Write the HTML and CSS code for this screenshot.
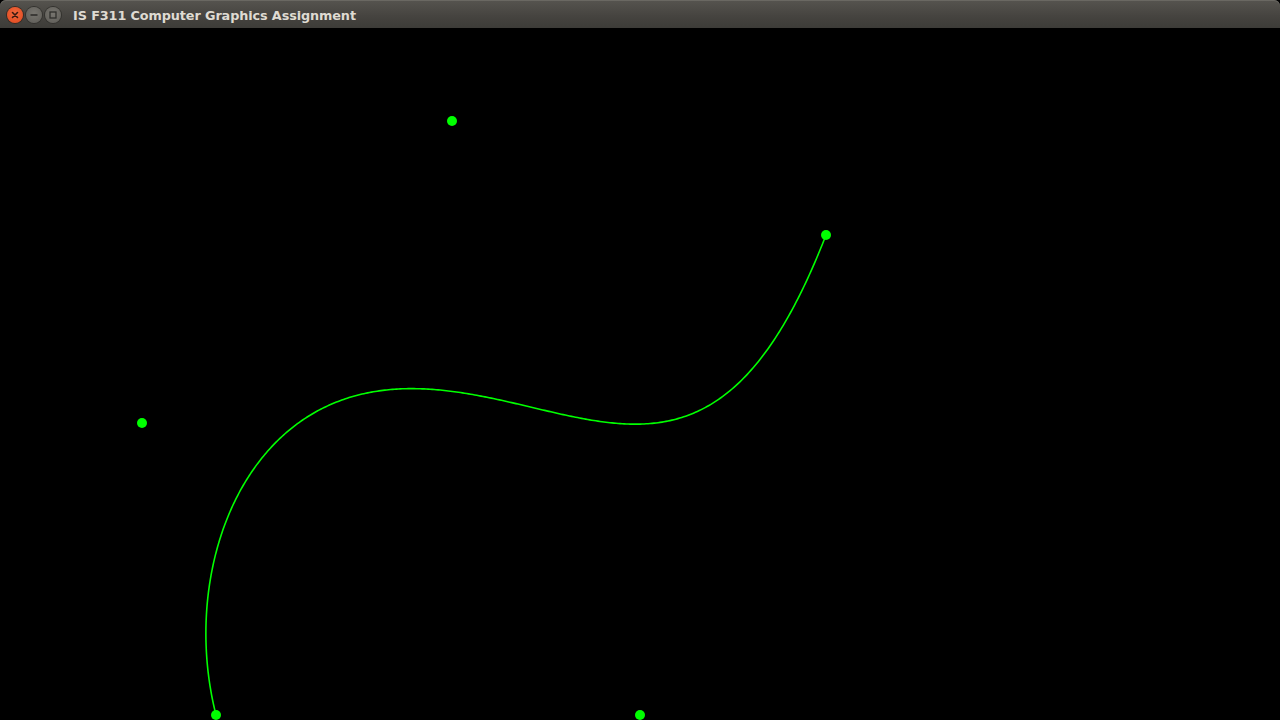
FILE: index.html
```html
<!DOCTYPE html>
<html>
<head>
<meta charset="utf-8">
<title>IS F311 Computer Graphics Assignment</title>
<link rel="stylesheet" href="styles.css">
</head>
<body>
<div class="window">
  <div class="titlebar">
    <div class="controls">
      <span class="btn close"><svg viewBox="0 0 16 16" width="16" height="16"><path d="M5.5 5.5 L10.5 10.5 M10.5 5.5 L5.5 10.5" stroke="#3a1a10" stroke-width="1.6" stroke-linecap="round"/></svg></span>
      <span class="btn other"><svg viewBox="0 0 16 16" width="16" height="16"><path d="M4.5 8 H11.5" stroke="#2f2e2b" stroke-width="1.6"/></svg></span>
      <span class="btn other"><svg viewBox="0 0 16 16" width="16" height="16"><rect x="5" y="5" width="6" height="6" fill="none" stroke="#2f2e2b" stroke-width="1.3"/></svg></span>
    </div>
    <span class="title">IS F311 Computer Graphics Assignment</span>
  </div>
  <div class="canvas">
    <svg class="scene" viewBox="0 28 1280 692" width="1280" height="692">
      <polyline id="curve" fill="none" stroke="#00ff00" stroke-width="1.6" points=""/>
      <g fill="#00ff00">
        <circle cx="216" cy="715" r="5"/>
        <circle cx="142" cy="423" r="5"/>
        <circle cx="452" cy="121" r="5"/>
        <circle cx="640" cy="715" r="5"/>
        <circle cx="826" cy="235" r="5"/>
      </g>
    </svg>
  </div>
</div>
<script src="script.js"></script>
</body>
</html>
```

FILE: styles.css
```css
html, body {
  margin: 0;
  padding: 0;
  background: #000;
  width: 1280px;
  height: 720px;
  overflow: hidden;
}
.window {
  display: flex;
  flex-direction: column;
  width: 1280px;
  height: 720px;
}
.titlebar {
  height: 28px;
  flex: 0 0 28px;
  display: flex;
  align-items: center;
  background: linear-gradient(#56544f, #45433f 60%, #3d3c38);
  border-radius: 6px 6px 0 0;
  box-shadow: inset 0 1px 0 #6a6862;
}
.controls {
  display: flex;
  gap: 3px;
  margin-left: 7px;
  margin-top: 2px;
}
.btn {
  width: 16px;
  height: 16px;
  border-radius: 50%;
  display: flex;
  align-items: center;
  justify-content: center;
}
.close {
  background: radial-gradient(circle at 50% 40%, #f26a3e, #e0461c);
  box-shadow: 0 0 0 1px #3a2a22;
}
.other {
  background: radial-gradient(circle at 50% 40%, #77756f, #5d5b56);
  box-shadow: 0 0 0 1px #33322e;
}
.title {
  margin-left: 12px;
  margin-top: 2px;
  font-family: "DejaVu Sans", "Noto Sans", sans-serif;
  font-weight: bold;
  font-size: 12.8px;
  color: #dfdbd2;
  letter-spacing: -0.1px;
}
.canvas {
  flex: 1;
  background: #000;
  overflow: hidden;
}
.scene {
  display: block;
}
```

FILE: script.js
```js
(function () {
  var P = [[216, 715], [142, 423], [452, 121], [640, 715], [826, 235]];
  var B = [1, 4, 6, 4, 1];
  var pts = [];
  var N = 400;
  for (var i = 0; i <= N; i++) {
    var t = i / N, u = 1 - t, x = 0, y = 0;
    for (var k = 0; k < 5; k++) {
      var c = B[k] * Math.pow(u, 4 - k) * Math.pow(t, k);
      x += c * P[k][0];
      y += c * P[k][1];
    }
    pts.push(x.toFixed(2) + "," + y.toFixed(2));
  }
  document.getElementById("curve").setAttribute("points", pts.join(" "));
})();
```
